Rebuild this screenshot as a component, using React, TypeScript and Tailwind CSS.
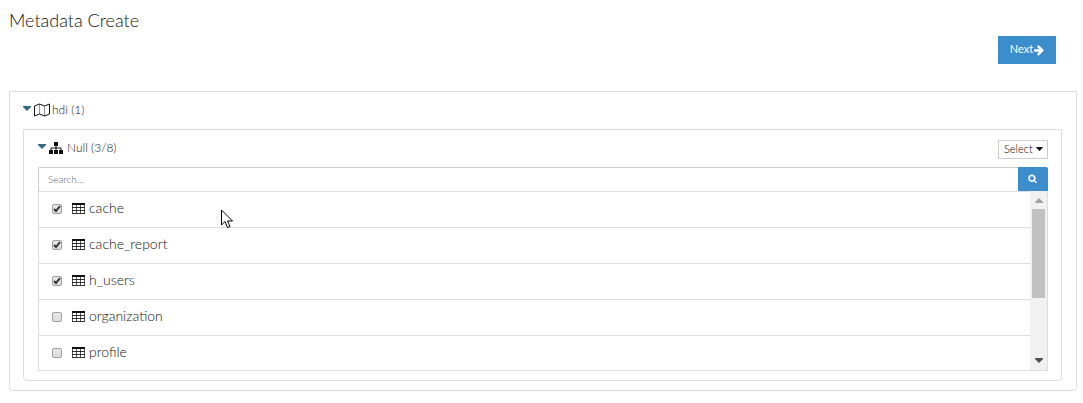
import React, { useState } from 'react';

type IconProps = { className?: string };

const ArrowRightIcon = ({ className }: IconProps) => (
  <svg viewBox="0 0 1536 1792" fill="currentColor" className={className} aria-hidden="true">
    <path d="M1472 960q0 54-37 91l-651 651q-39 37-91 37-51 0-90-37l-75-75q-38-38-38-91t38-91l293-293h-704q-52 0-84.500-37.500t-32.500-90.500v-128q0-53 32.500-90.500t84.500-37.500h704l-293-294q-38-36-38-90t38-90l75-75q38-38 90-38 53 0 91 38l651 651q37 35 37 90z" />
  </svg>
);

const SearchIcon = ({ className }: IconProps) => (
  <svg viewBox="0 0 1792 1792" fill="currentColor" stroke="currentColor" strokeWidth="80" className={className} aria-hidden="true">
    <path d="M1216 832q0-185-131.500-316.500t-316.500-131.500-316.500 131.500-131.500 316.500 131.500 316.500 316.500 131.500 316.500-131.500 131.500-316.500zm512 832q0 52-38 90t-90 38q-54 0-90-38l-343-342q-179 124-399 124-143 0-273.500-55.500t-225-150-150-225-55.500-273.500 55.500-273.500 150-225 225-150 273.500-55.500 273.500 55.500 225 150 150 225 55.500 273.500q0 220-124 399l343 343q37 37 37 90z" />
  </svg>
);

const CaretIcon = ({ className }: IconProps) => (
  <svg viewBox="0 0 8 5" fill="currentColor" className={className} aria-hidden="true">
    <path d="M0 0h8v1L4 5 0 1z" />
  </svg>
);

const MapIcon = ({ className }: IconProps) => (
  <svg viewBox="0 0 16 14" fill="none" stroke="currentColor" className={className} aria-hidden="true">
    <path d="M.5 3 5.500 1l5 2 5-2v10l-5 2-5-2-5 2z" strokeLinejoin="round" />
    <path d="M5.500 1v10M10.500 3v10" strokeOpacity=".45" />
  </svg>
);

const SitemapIcon = ({ className }: IconProps) => (
  <svg viewBox="0 0 14 12" fill="currentColor" className={className} aria-hidden="true">
    <path d="M5 0h4v4H7.500v1.500h4.500q.5 0 .5.500v2H14v4h-4V8h1.500V6.500h-4V8H9v4H5V8h1.500V6.500h-4V8H4v4H0V8h1.500V6q0-.5.5-.5h4.500V4H5z" />
  </svg>
);

const TableIcon = ({ className }: IconProps) => (
  <svg viewBox="0 0 13 11" fill="none" stroke="currentColor" className={className} aria-hidden="true">
    <path d="M.5 1v9.500M12.500 1v9.500M4.500 1v9.500M8.500 1v9.500" strokeOpacity=".7" />
    <path d="M0 1h13" strokeWidth="2" />
    <path d="M0 4.500h13M0 7.500h13M0 10.500h13" strokeOpacity=".85" />
  </svg>
);

const CursorIcon = ({ className }: IconProps) => (
  <svg viewBox="0 0 12 19" fill="#fff" stroke="#000" className={className} aria-hidden="true">
    <path d="M.5 1v15l3.500-3.500 2.500 6 2.500-1-2.500-5.500h5z" />
  </svg>
);

const tables = [
  { name: 'cache', checked: true },
  { name: 'cache_report', checked: true },
  { name: 'h_users', checked: true },
  { name: 'organization', checked: false },
  { name: 'profile', checked: false },
];

function TableRow({ name, checked }: { name: string; checked: boolean }) {
  const [selected, setSelected] = useState(checked);

  return (
    <li className="h-9 border-t border-[#ddd]">
      <label className="flex h-full items-center pb-[3px] pl-[13px]">
        <span className="relative mt-[2px] flex">
          <input
            type="checkbox"
            checked={selected}
            onChange={(e) => setSelected(e.target.checked)}
            className="peer h-[10px] w-[10px] appearance-none rounded-xs border border-[#a0a0a0] bg-linear-to-b from-[#e8e8e8] to-[#dcdcdc]"
          />
          <svg
            viewBox="0 0 10 10"
            fill="none"
            stroke="#333"
            strokeWidth="2"
            className="pointer-events-none invisible absolute inset-0 peer-checked:visible"
            aria-hidden="true"
          >
            <path d="M2 5l2 2 4-5" />
          </svg>
        </span>
        <TableIcon className="ml-[10px] h-[11px] w-[13px]" />
        <span className="ml-1 text-[14px] leading-5">{name}</span>
      </label>
    </li>
  );
}

function Scrollbar() {
  return (
    <div className="flex w-[17px] flex-col items-center bg-[#f1f1f1] pt-px text-[#505050]" aria-hidden="true">
      <div className="flex h-[17px] items-center text-[#a3a3a3]">
        <CaretIcon className="h-[5px] w-2 rotate-180" />
      </div>
      <div className="h-[89px] w-[13px] bg-[#c1c1c1]" />
      <div className="mt-auto flex h-[19px] items-center">
        <CaretIcon className="h-[5px] w-2" />
      </div>
    </div>
  );
}

export default function App() {
  return (
    <main className="relative bg-white pt-2 pr-[6px] pl-[9px] font-['Lato','Liberation_Sans',sans-serif] font-light text-[#111]">
      <h1 className="text-[18px] leading-6">Metadata Create</h1>

      <div className="mt-1 flex justify-end pr-[21px]">
        <button type="button" className="flex h-7 w-[58px] items-center justify-center bg-[#3c8dcc] pb-px text-[11px] font-normal text-white">
          Next
          <ArrowRightIcon className="ml-px h-3 w-[10px]" />
        </button>
      </div>

      <section className="mt-[27px] rounded-b-sm border border-[#ddd] pt-2 pr-[14px] pb-[9px] pl-[13px]">
        <h2 className="flex items-center text-[12px] leading-5">
          <CaretIcon className="mr-[3px] mb-[3px] h-[5px] w-2 text-[#336a87]" />
          <MapIcon className="mr-[2px] h-[14px] w-4" />
          hdi (1)
        </h2>

        <section className="mt-[9px] rounded-b-sm border border-[#ddd] pt-2 pr-[13px] pb-[9px] pl-[14px]">
          <div className="flex h-[29px] items-start justify-between">
            <h3 className="flex items-center text-[12px] leading-5">
              <CaretIcon className="mr-[3px] mb-[3px] h-[5px] w-2 text-[#336a87]" />
              <SitemapIcon className="mr-1 h-3 w-[14px]" />
              Null (3/8)
            </h3>
            <label className="relative mt-[2px] flex items-center">
              <select
                aria-label="Select"
                className="h-[19px] w-[50px] appearance-none border border-[#ccc] bg-white pb-[2px] pl-[5px] text-[11px] text-black"
              >
                <option>Select</option>
              </select>
              <CaretIcon className="pointer-events-none absolute right-[5px] mb-px h-1 w-[7px]" />
            </label>
          </div>

          <div className="flex h-6">
            <input
              type="text"
              aria-label="Search"
              placeholder="Search..."
              className="min-w-0 flex-1 rounded-tl-xs border border-r-0 border-b-0 border-[#ccc] px-[9px] text-[10px] placeholder:text-[#666]"
            />
            <button type="button" aria-label="Search" className="flex w-[30px] items-center justify-center rounded-tr-xs bg-[#3c8dcc] pr-[2px] pb-[2px] text-white">
              <SearchIcon className="h-[9px] w-[9px]" />
            </button>
          </div>

          <div className="flex h-[180px] border-x border-b border-[#ddd]">
            <ul className="flex-1 overflow-hidden">
              {tables.map((table) => (
                <TableRow key={table.name} name={table.name} checked={table.checked} />
              ))}
            </ul>
            <Scrollbar />
          </div>
        </section>
      </section>

      <CursorIcon className="pointer-events-none absolute top-[209px] left-[221px] h-[19px] w-3" />
    </main>
  );
}
